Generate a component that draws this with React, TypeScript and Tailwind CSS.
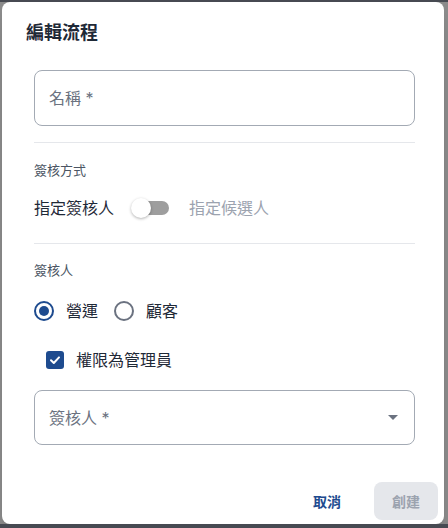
import React, { useState } from 'react';

const font = { fontFamily: 'Inter, "Noto Sans CJK TC", sans-serif' };

const App: React.FC = () => {
  const [reviewer, setReviewer] = useState('ops');
  const [isAdmin, setIsAdmin] = useState(true);

  return (
    <div
      style={font}
      className="w-[448px] h-[528px] bg-[#8b8b8b] border-t-2 border-b-4 border-[#474a52] pl-[2px] pr-[4px] overflow-hidden"
    >
      <div className="w-[442px] h-[522px] bg-white rounded-lg shadow-xl flex flex-col">
        <h2 className="px-6 pt-[19px] text-[18px] leading-6 font-semibold text-[#1f2937]">
          編輯流程
        </h2>

        <div className="pl-8 pr-[29px] flex flex-col">
          <div className="mt-[25px] h-14 rounded-lg border border-[#a3aab4] flex items-center px-[14px] text-[16px] text-[#6b7280]">
            名稱 *
          </div>

          <div className="mt-4 h-px bg-[#e5e7eb]" />

          <div className="mt-[17px] text-[13px] leading-5 text-[#4b5563]">簽核方式</div>

          <div className="mt-4 flex items-center h-6">
            <span className="text-[16px] text-[#1f2937]">指定簽核人</span>
            <div className="relative ml-[17px] w-[38px] h-5">
              <div className="absolute left-[4px] top-[3px] w-[34px] h-[14px] rounded-full bg-[#9e9e9e]" />
              <div className="absolute left-0 top-0 w-5 h-5 rounded-full bg-white shadow-[0_1px_3px_rgba(0,0,0,0.3)]" />
            </div>
            <span className="ml-[20px] text-[16px] text-[#9ca3af]">指定候選人</span>
          </div>

          <div className="mt-[23px] h-px bg-[#e5e7eb]" />

          <div className="mt-4 text-[13px] leading-5 text-[#4b5563]">簽核人</div>

          <div className="mt-[21px] flex items-center h-5">
            <button onClick={() => setReviewer('ops')} className="flex items-center">
              <span
                className={`w-5 h-5 rounded-full border-2 flex items-center justify-center ${
                  reviewer === 'ops' ? 'border-[#1e4b8f]' : 'border-[#6b7280]'
                }`}
              >
                {reviewer === 'ops' && <span className="w-[10px] h-[10px] rounded-full bg-[#1e4b8f]" />}
              </span>
              <span className="ml-3 text-[16px] text-[#1f2937]">營運</span>
            </button>
            <button onClick={() => setReviewer('customer')} className="ml-4 flex items-center">
              <span
                className={`w-5 h-5 rounded-full border-2 flex items-center justify-center ${
                  reviewer === 'customer' ? 'border-[#1e4b8f]' : 'border-[#6b7280]'
                }`}
              >
                {reviewer === 'customer' && <span className="w-[10px] h-[10px] rounded-full bg-[#1e4b8f]" />}
              </span>
              <span className="ml-3 text-[16px] text-[#1f2937]">顧客</span>
            </button>
          </div>

          <button onClick={() => setIsAdmin(!isAdmin)} className="mt-[30px] ml-3 flex items-center h-[18px]">
            <span
              className={`w-[18px] h-[18px] rounded-[3px] flex items-center justify-center ${
                isAdmin ? 'bg-[#1e4b8f]' : 'border-2 border-[#6b7280]'
              }`}
            >
              {isAdmin && (
                <svg width="12" height="12" viewBox="0 0 12 12" fill="none">
                  <path d="M2 6.2 4.8 9 10 3.4" stroke="white" strokeWidth="2" strokeLinecap="round" strokeLinejoin="round" />
                </svg>
              )}
            </span>
            <span className="ml-3 text-[16px] text-[#1f2937]">權限為管理員</span>
          </button>

          <div className="mt-[21px] h-[55px] rounded-lg border border-[#a3aab4] flex items-center justify-between px-[14px] text-[16px] text-[#6b7280]">
            <span>簽核人 *</span>
            <svg width="10" height="5" viewBox="0 0 10 5" className="mr-[2px]">
              <path d="M0 0h10L5 5z" fill="#6b7280" />
            </svg>
          </div>
        </div>

        <div className="mt-auto flex items-center justify-end pr-[6px] pb-1">
          <button className="text-[14px] font-semibold text-[#1e4b8f] mr-[33px]">取消</button>
          <button
            disabled
            className="w-[64px] h-[38px] rounded-lg bg-[#e5e7eb] text-[14px] font-semibold text-[#9ca3af]"
          >
            創建
          </button>
        </div>
      </div>
    </div>
  );
};

export default App;
